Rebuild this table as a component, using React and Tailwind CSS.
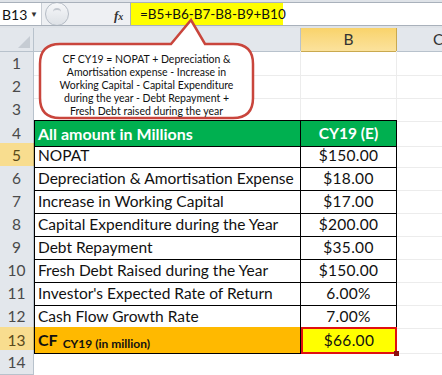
import React from "react";

const rows = [
  { n: 5, label: "NOPAT", value: "$150.00" },
  { n: 6, label: "Depreciation & Amortisation Expense", value: "$18.00" },
  { n: 7, label: "Increase in Working Capital", value: "$17.00" },
  { n: 8, label: "Capital Expenditure during the Year", value: "$200.00" },
  { n: 9, label: "Debt Repayment", value: "$35.00" },
  { n: 10, label: "Fresh Debt Raised during the Year", value: "$150.00" },
  { n: 11, label: "Investor's Expected Rate of Return", value: "6.00%" },
  { n: 12, label: "Cash Flow Growth Rate", value: "7.00%" },
];

const font = { fontFamily: "Lato, 'Open Sans', sans-serif" };

const RowHead = ({ n, active }) => (
  <div
    className={`flex items-center justify-center border-r border-b pt-[1px] text-[15.5px] ${
      active
        ? "bg-[#f8dd8f] border-[#c9b26b] text-[#5a4a1a]"
        : "bg-[#e3e7ec] border-[#b8c2cc] text-[#4a4a4a]"
    }`}
  >
    {n}
  </div>
);

const App = () => {
  return (
    <div className="relative w-[442px] h-[375px] overflow-hidden bg-white text-[#111]" style={font}>
      {/* formula bar */}
      <div className="h-[28px] bg-[#dfe3e8] pt-[2px] pb-[2px]">
        <div className="flex h-[24px] border-t border-b border-[#a9b1bb] bg-[#eef0f3]">
          <div className="flex w-[42px] items-center justify-between bg-white pl-[2px] pr-[3px] text-[14px] border-r border-[#c7ccd3]">
            <span>B13</span>
            <span className="text-[8px] text-[#333]">▼</span>
          </div>
          <div className="relative w-[88px] overflow-hidden">
            <div className="absolute left-[3px] top-[-1px] h-[24px] w-[24px] rounded-full border border-[#b5bcc5] bg-gradient-to-b from-[#f7f8fa] to-[#dde1e6]" />
            <div className="absolute left-[11px] top-[5px] h-[8px] w-[8px] rounded-full border-t-2 border-[#c3c8cf]" />
            <span
              className="absolute left-[72px] top-[3px] text-[13px] italic font-semibold text-[#333]"
              style={{ fontFamily: "'Liberation Serif', serif" }}
            >
              f<span className="text-[10px]">x</span>
            </span>
          </div>
          <div className="flex flex-1 bg-white border-l border-[#a9b1bb]">
            <div className="flex w-[152px] items-center whitespace-nowrap bg-[#ffff00] pl-[9px] text-[13.5px]">
              =B5+B6-B7-B8-B9+B10
            </div>
          </div>
        </div>
      </div>

      {/* column headers */}
      <div className="grid grid-cols-[34px_267px_96px_1fr] h-[23px]">
        <div className="relative bg-[#e3e7ec] border-r border-b border-[#b8c2cc]">
          <svg className="absolute right-[3px] bottom-[3px]" width="12" height="12">
            <polygon points="12,0 12,12 0,12" fill="#c6ccd3" />
          </svg>
        </div>
        <div className="bg-[#e3e7ec] border-r border-b border-[#b8c2cc]" />
        <div className="flex items-center justify-center bg-gradient-to-b from-[#f9d36a] to-[#fbe29c] border-r border-b border-[#c9a94f] text-[15.5px] text-[#333]">
          B
        </div>
        <div className="flex items-center bg-[#e3e7ec] border-b border-[#b8c2cc] pl-[36px] text-[15.5px] text-[#333]">
          C
        </div>
      </div>

      {/* rows 1-3 */}
      {[1, 2, 3].map((n) => (
        <div key={n} className="grid grid-cols-[34px_267px_96px_1fr] h-[23px]">
          <RowHead n={n} />
          <div className="border-r border-b border-[#ececec]" />
          <div className="border-r border-b border-[#ececec]" />
          <div className="border-b border-[#ececec]" />
        </div>
      ))}

      {/* row 4 */}
      <div className="grid grid-cols-[34px_267px_96px_1fr] h-[23px]">
        <RowHead n={4} />
        <div className="flex items-center bg-[#00b050] border-t border-l border-r border-b border-black pl-[3px] pt-[1px] text-[16px] font-bold text-white">
          All amount in Millions
        </div>
        <div className="flex items-center justify-center bg-[#00b050] border-t border-r border-b border-black pt-[1px] text-[15.5px] font-bold text-white">
          CY19 (E)
        </div>
        <div className="border-b border-[#ececec]" />
      </div>

      {rows.map((r) => (
        <div key={r.n} className="grid grid-cols-[34px_267px_96px_1fr] h-[23px]">
          <RowHead n={r.n} active={r.n === 5} />
          <div className="flex items-center border-l border-r border-b border-black pl-[3px] pt-[1px] text-[15.5px] whitespace-nowrap overflow-hidden">
            {r.label}
          </div>
          <div className="flex items-center justify-center border-r border-b border-black pt-[1px] text-[15.5px] tracking-[0.3px]">
            {r.value}
          </div>
          <div className="border-b border-[#ececec]" />
        </div>
      ))}

      {/* row 13 */}
      <div className="grid grid-cols-[34px_267px_96px_1fr] h-[23px]">
        <RowHead n={13} active />
        <div className="flex items-center bg-[#ffb900] border-l border-r border-b border-black pl-[3px] font-bold text-[#111]">
          <span className="text-[16px]">CF</span>
          <span className="ml-[5px] mt-[7px] text-[12px]">CY19 (in million)</span>
        </div>
        <div className="relative flex items-center justify-center bg-[#ffff00] border-[2px] border-[#e01010] text-[15.5px] tracking-[0.3px]">
          $66.00
          <div className="absolute right-[-4px] bottom-[-4px] h-[5px] w-[5px] bg-[#8b1010]" />
        </div>
        <div className="border-b border-[#ececec]" />
      </div>

      {/* row 14 */}
      <div className="grid grid-cols-[34px_267px_96px_1fr] h-[23px]">
        <RowHead n={14} />
        <div />
        <div />
        <div />
      </div>

      {/* callout */}
      <svg className="absolute left-0 top-0 pointer-events-none" width="442" height="130">
        <path
          d="M60 44 L171 44 L191 20 L205 44 L233 44 Q253 44 253 64 L253 98 Q253 118 233 118 L60 118 Q40 118 40 98 L40 64 Q40 44 60 44 Z"
          fill="#ffffff"
          stroke="#c9453c"
          strokeWidth="2.5"
        />
      </svg>
      <div className="absolute left-[40px] top-[53px] w-[213px] text-center text-[10.5px] leading-[13px] text-[#111]">
        CF CY19 = NOPAT + Depreciation &amp;
        <br />
        Amortisation expense - Increase in
        <br />
        Working Capital - Capital Expenditure
        <br />
        during the year - Debt Repayment +
        <br />
        Fresh Debt raised during the year
      </div>
    </div>
  );
};

export default App;
